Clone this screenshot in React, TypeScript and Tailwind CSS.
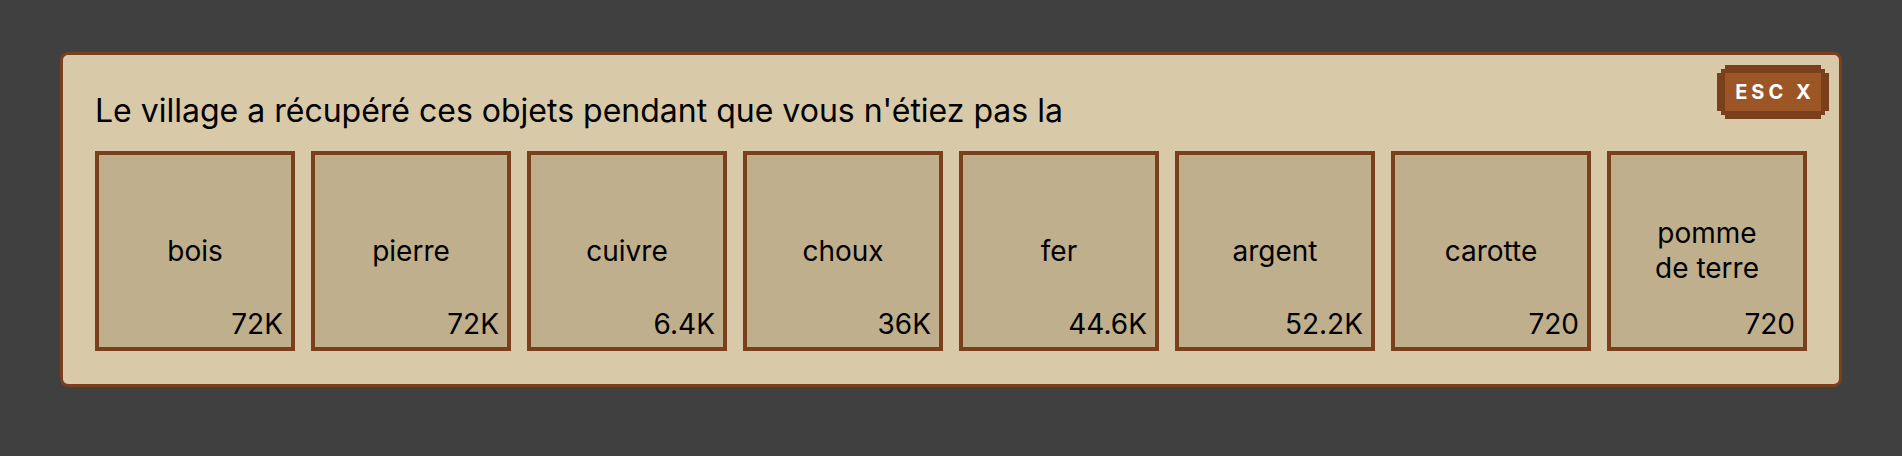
const items = [
  { name: 'bois', qty: '72K' },
  { name: 'pierre', qty: '72K' },
  { name: 'cuivre', qty: '6.4K' },
  { name: 'choux', qty: '36K' },
  { name: 'fer', qty: '44.6K' },
  { name: 'argent', qty: '52.2K' },
  { name: 'carotte', qty: '720' },
  { name: 'pomme de terre', qty: '720' },
];

function EscButton() {
  return (
    <button
      className="absolute top-[18px] right-[18px] w-[96px] h-[38px] bg-[#9c5626] text-white font-bold text-[20px] leading-none tracking-[0.2em] flex items-center justify-center shadow-[0_-8px_0_#7a401c,0_8px_0_#7a401c,-8px_0_0_#7a401c,8px_0_0_#7a401c,-4px_-4px_0_#7a401c,4px_-4px_0_#7a401c,-4px_4px_0_#7a401c,4px_4px_0_#7a401c]"
    >
      <span className="pl-[0.2em]">ESC X</span>
    </button>
  );
}

export default function App() {
  return (
    <div
      className="min-h-screen bg-[#404040] flex justify-center items-start pt-[52px]"
      style={{ fontFamily: 'Inter, "Noto Sans", sans-serif' }}
    >
      <div className="relative bg-[#d8c9a8] border-[3px] border-[#7a401c] rounded-lg px-8 pt-[36px] pb-[33px]">
        <EscButton />
        <h1 className="text-[32px] leading-[39px] font-normal text-black mb-[21px]">
          Le village a récupéré ces objets pendant que vous n'étiez pas la
        </h1>
        <div className="flex gap-4">
          {items.map(it => (
            <div
              key={it.name}
              className="relative w-[200px] h-[200px] border-4 border-[#7a401c] bg-[#bfaf8d] flex items-center justify-center text-center px-8"
            >
              <span className="text-[28px] leading-[35px] text-black">{it.name}</span>
              <span className="absolute bottom-[6px] right-2 text-[28px] leading-[34px] text-black">
                {it.qty}
              </span>
            </div>
          ))}
        </div>
      </div>
    </div>
  );
}
